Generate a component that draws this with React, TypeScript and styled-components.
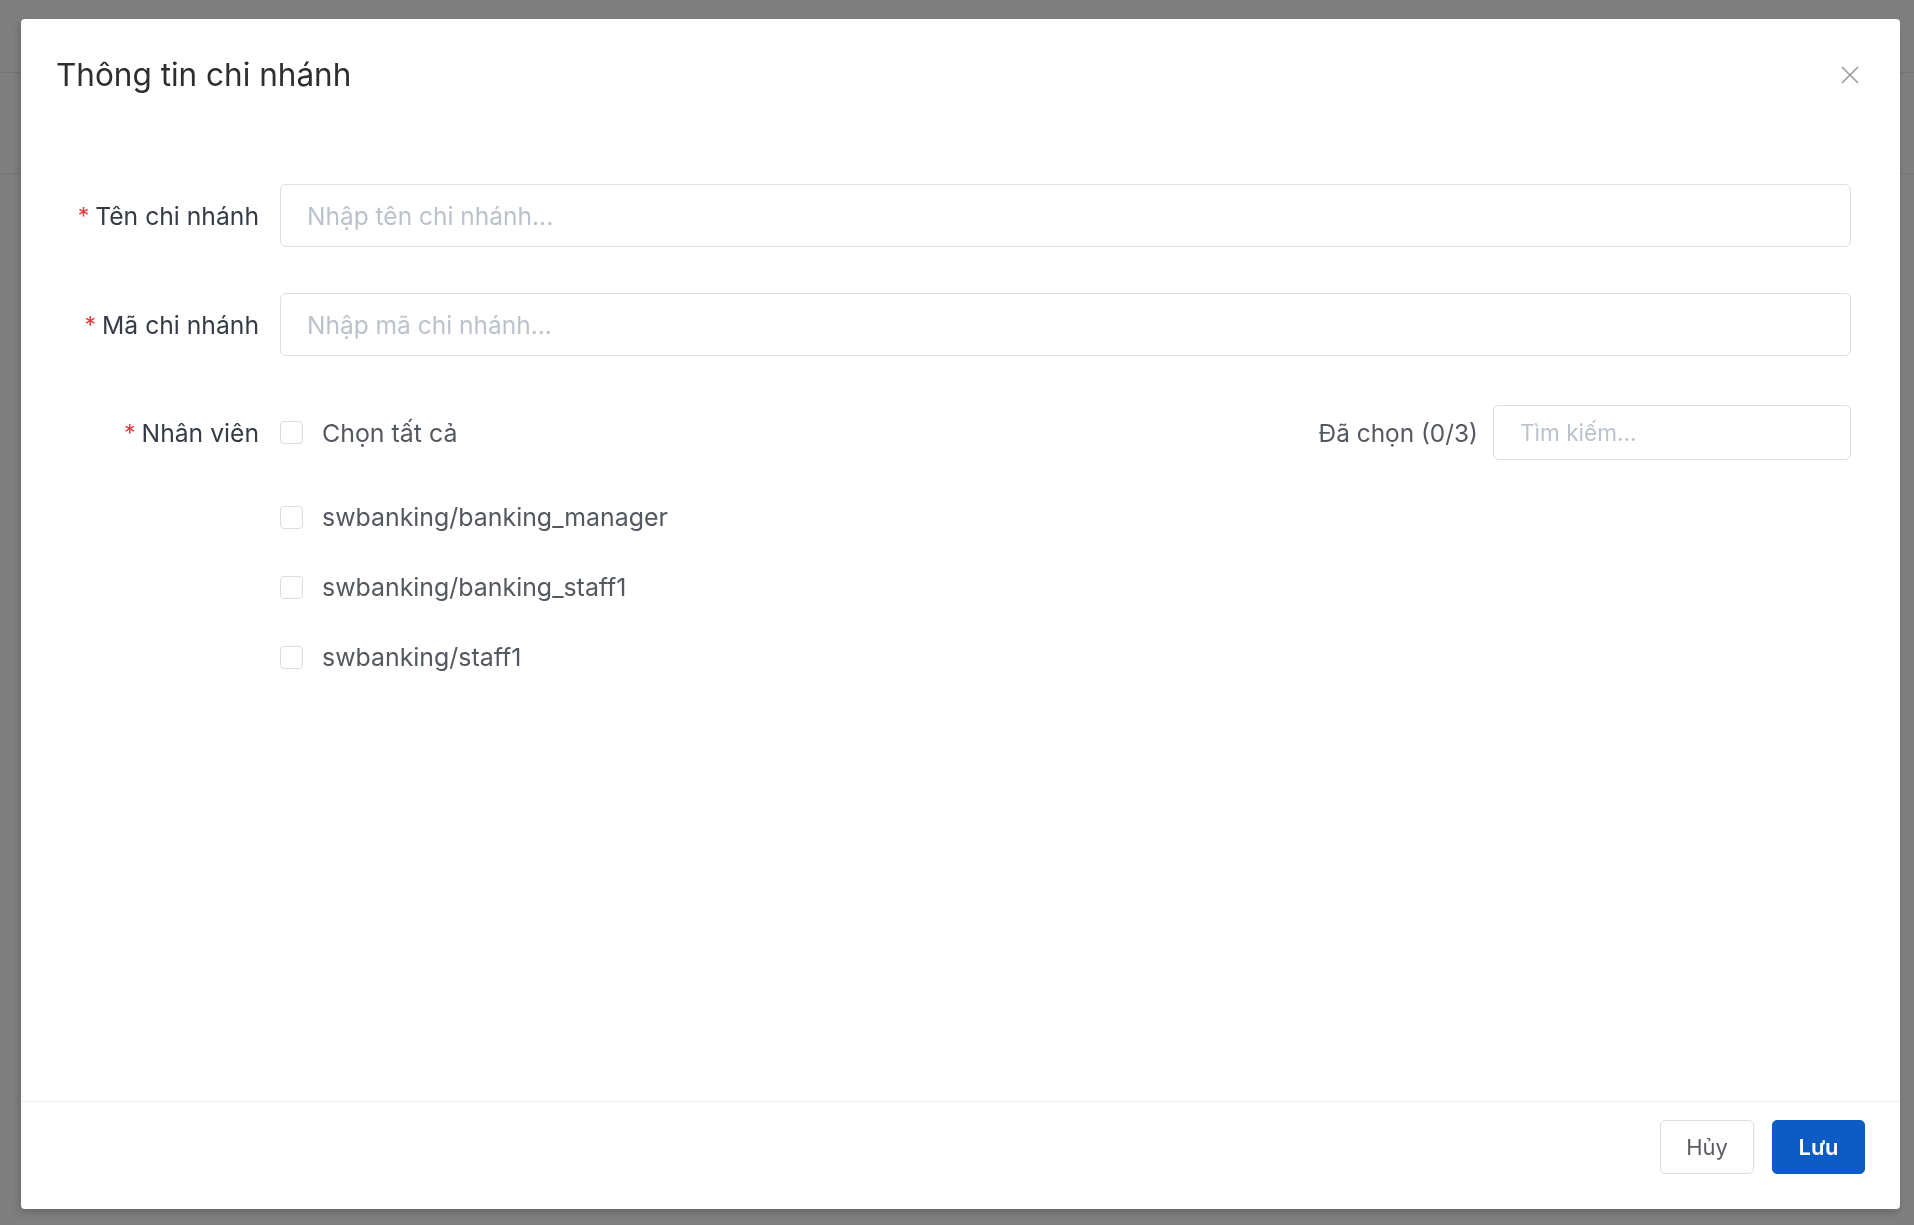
import styled, { createGlobalStyle } from "styled-components";

const GlobalStyle = createGlobalStyle`
  html, body {
    margin: 0;
    padding: 0;
    background: #ffffff;
    font-family: Inter, "Noto Sans", "Liberation Sans", sans-serif;
  }
  * {
    box-sizing: border-box;
  }
`;

const Page = styled.div`
  width: 100%;
  height: 1225px;
  background: #ffffff;
`;

const PageHeader = styled.div`
  height: 73px;
  border-bottom: 1px solid #eaeaea;
`;

const PageToolbar = styled.div`
  height: 101px;
  border-bottom: 1px solid #eaeaea;
`;

const Overlay = styled.div`
  position: fixed;
  inset: 0;
  background: rgba(0, 0, 0, 0.5);
  padding: 19px 14px 16px 21px;
  display: flex;
`;

const Modal = styled.div`
  flex: 1;
  display: flex;
  flex-direction: column;
  background: #ffffff;
  border-radius: 4px;
  box-shadow: -2px 4px 10px rgba(0, 0, 0, 0.18);
`;

const ModalHeader = styled.div`
  height: 111px;
  display: flex;
  align-items: center;
  justify-content: space-between;
  padding: 0 41px 0 35px;
`;

const Title = styled.h2`
  margin: 0;
  font-size: 31.5px;
  font-weight: 400;
  color: #2e2e2e;
  line-height: 40px;
`;

const CloseButton = styled.button`
  width: 18px;
  height: 18px;
  padding: 0;
  border: none;
  background: none;
  display: flex;
  cursor: pointer;
`;

const ModalBody = styled.div`
  flex: 1;
  padding: 54px 49px 0 35px;
`;

const FormRow = styled.div<{ $mb?: number }>`
  display: flex;
  align-items: center;
  margin-bottom: ${({ $mb }) => $mb ?? 46}px;
`;

const Label = styled.label`
  width: 224px;
  flex-shrink: 0;
  padding-right: 21px;
  text-align: right;
  font-size: 24.7px;
  color: #363c47;
  white-space: nowrap;
`;

const Required = styled.span`
  color: #e0383e;
  font-size: 23px;
  margin-right: 6px;
  position: relative;
  top: -1px;
`;

const TextInput = styled.input<{ $width?: number; $height?: number; $small?: boolean }>`
  ${({ $width }) => ($width ? `width: ${$width}px;` : "flex: 1;")}
  height: ${({ $height }) => $height || 63}px;
  border: 1px solid #dcdee4;
  border-radius: 6px;
  padding: 0 26px;
  font-family: inherit;
  font-size: ${({ $small }) => ($small ? 22.6 : 24.5)}px;
  color: #333;
  outline: none;
  &::placeholder {
    color: #bcc2cc;
  }
`;

const Checkbox = styled.span`
  width: 23px;
  height: 23px;
  flex-shrink: 0;
  border: 1px solid #dcdde3;
  border-radius: 4px;
  background: #ffffff;
`;

const CheckText = styled.span`
  font-size: 24.9px;
  color: #54585f;
  margin-left: 19px;
  white-space: nowrap;
`;

const EmployeeBar = styled.div`
  flex: 1;
  display: flex;
  align-items: center;
`;

const Counter = styled.span`
  margin-left: auto;
  margin-right: 15px;
  font-size: 24.4px;
  color: #54585f;
`;

const EmployeeList = styled.div`
  margin-top: 22px;
  padding-left: 224px;
`;

const EmployeeItem = styled.div`
  height: 70px;
  display: flex;
  align-items: center;
`;

const ModalFooter = styled.div`
  border-top: 1px solid #efefef;
  padding: 18px 35px 35px;
  display: flex;
  justify-content: flex-end;
  gap: 18px;
`;

const Button = styled.button<{ $primary?: boolean }>`
  height: 54px;
  width: ${({ $primary }) => ($primary ? 93 : 94)}px;
  border-radius: 5px;
  font-family: inherit;
  font-size: 22px;
  cursor: pointer;
  border: 1px solid ${({ $primary }) => ($primary ? "#0d5bc4" : "#dcdde3")};
  background: ${({ $primary }) => ($primary ? "#0d5bc4" : "#ffffff")};
  color: ${({ $primary }) => ($primary ? "#ffffff" : "#5a5d63")};
  font-weight: ${({ $primary }) => ($primary ? 600 : 400)};
`;

const employees = [
  "swbanking/banking_manager",
  "swbanking/banking_staff1",
  "swbanking/staff1",
];

export default function App() {
  return (
    <>
      <GlobalStyle />
      <Page>
        <PageHeader />
        <PageToolbar />
      </Page>
      <Overlay>
        <Modal>
          <ModalHeader>
            <Title>Thông tin chi nhánh</Title>
            <CloseButton aria-label="Đóng">
              <svg width="18" height="18" viewBox="0 0 18 18">
                <path d="M1 1 L17 17 M17 1 L1 17" stroke="#9a9a9a" strokeWidth="1.6" fill="none" />
              </svg>
            </CloseButton>
          </ModalHeader>

          <ModalBody>
            <FormRow>
              <Label>
                <Required>*</Required>Tên chi nhánh
              </Label>
              <TextInput placeholder="Nhập tên chi nhánh..." />
            </FormRow>

            <FormRow $mb={49}>
              <Label>
                <Required>*</Required>Mã chi nhánh
              </Label>
              <TextInput placeholder="Nhập mã chi nhánh..." />
            </FormRow>

            <FormRow $mb={0}>
              <Label>
                <Required>*</Required>Nhân viên
              </Label>
              <EmployeeBar>
                <Checkbox />
                <CheckText>Chọn tất cả</CheckText>
                <Counter>Đã chọn (0/3)</Counter>
                <TextInput $width={358} $height={55} $small placeholder="Tìm kiếm..." />
              </EmployeeBar>
            </FormRow>

            <EmployeeList>
              {employees.map((name) => (
                <EmployeeItem key={name}>
                  <Checkbox />
                  <CheckText>{name}</CheckText>
                </EmployeeItem>
              ))}
            </EmployeeList>
          </ModalBody>

          <ModalFooter>
            <Button>Hủy</Button>
            <Button $primary>Lưu</Button>
          </ModalFooter>
        </Modal>
      </Overlay>
    </>
  );
}
